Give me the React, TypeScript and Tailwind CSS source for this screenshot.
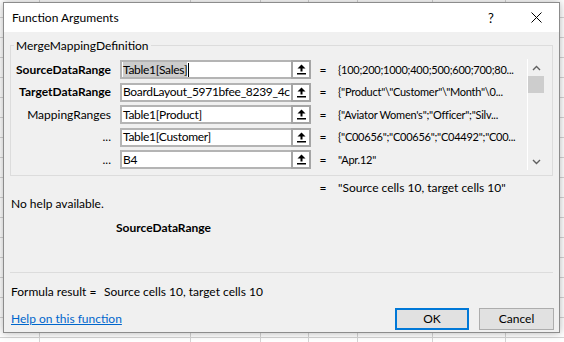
const rows = [
  {
    label: "SourceDataRange",
    bold: true,
    input: "Table1[Sales]",
    value: "{100;200;1000;400;500;600;700;80...",
    selected: true,
  },
  {
    label: "TargetDataRange",
    bold: true,
    input: "BoardLayout_5971bfee_8239_4c",
    value: '{"Product"\\"Customer"\\"Month"\\0...',
    selected: false,
  },
  {
    label: "MappingRanges",
    bold: false,
    input: "Table1[Product]",
    value: '{"Aviator Women\'s";"Officer";"Silv...',
    selected: false,
  },
  {
    label: "...",
    bold: false,
    input: "Table1[Customer]",
    value: '{"C00656";"C00656";"C04492";"C00...',
    selected: false,
  },
  {
    label: "...",
    bold: false,
    input: "B4",
    value: '"Apr.12"',
    selected: false,
  },
];

const RefArrow = () => (
  <svg width="9" height="11" viewBox="0 0 9 11">
    <path d="M4.5 0.5 L8.5 4.5 H5.5 V7.5 H3.5 V4.5 H0.5 Z" fill="#000" />
    <rect x="0" y="9" width="9" height="1.5" fill="#000" />
  </svg>
);

const Chevron = ({ up }: { up: boolean }) => (
  <svg width="9" height="6" viewBox="0 0 9 6">
    <path
      d={up ? "M1 5 L4.5 1.5 L8 5" : "M1 1 L4.5 4.5 L8 1"}
      fill="none"
      stroke="#606060"
      strokeWidth="1.4"
    />
  </svg>
);

const ArgRow = ({
  label,
  bold,
  input,
  value,
  selected,
}: (typeof rows)[number]) => (
  <div className="flex h-[19px] items-center">
    <div
      className={`w-[100px] shrink-0 text-right ${bold ? "font-bold" : ""}`}
    >
      {label}
    </div>
    <div className="ml-[9px] flex h-[19px] w-[171px] shrink-0 items-center overflow-hidden border-2 border-r-0 border-[#b4b4b4] bg-white pl-[1px] tracking-[-0.3px] whitespace-nowrap">
      {selected ? (
        <>
          <span className="bg-[#cccccc]">{input}</span>
          <span className="ml-[1px] h-[14px] w-px bg-black" />
        </>
      ) : (
        <span>{input}</span>
      )}
    </div>
    <div className="flex h-[19px] w-[20px] shrink-0 items-center justify-center border-2 border-[#a5a5a5] bg-white">
      <RefArrow />
    </div>
    <div className="w-[24px] shrink-0 text-center">=</div>
    <div className="ml-[3px] text-[11px] tracking-[-0.25px] whitespace-nowrap">
      {value}
    </div>
  </div>
);

export default function App() {
  return (
    <div className="relative h-[342px] w-[564px] overflow-hidden bg-white font-['Lato',sans-serif] text-[12px] leading-[16px] text-black">
      {/* spreadsheet grid behind the dialog */}
      <div className="absolute inset-0">
        <div className="absolute top-0 bottom-0 left-[39px] w-px bg-[#d4d4d4]" />
        <div className="absolute top-0 bottom-0 left-[190px] w-px bg-[#d4d4d4]" />
        <div className="absolute top-0 bottom-0 left-[260px] w-px bg-[#d4d4d4]" />
        <div className="absolute top-0 bottom-0 left-[308px] w-px bg-[#d4d4d4]" />
        <div className="absolute top-0 bottom-0 left-[357px] w-px bg-[#d4d4d4]" />
        <div className="absolute top-0 bottom-0 left-[432px] w-px bg-[#d4d4d4]" />
        <div className="absolute top-0 bottom-0 left-[505px] w-px bg-[#d4d4d4]" />
        <div className="absolute left-0 right-0 top-[337px] h-px bg-[#d4d4d4]" />
        <div className="absolute left-0 right-0 top-[317px] h-px bg-[#d4d4d4]" />
        <div className="absolute left-0 right-0 top-[297px] h-px bg-[#d4d4d4]" />
        <div className="absolute left-0 right-0 top-[277px] h-px bg-[#d4d4d4]" />
        <div className="absolute left-0 right-0 top-[257px] h-px bg-[#d4d4d4]" />
        <div className="absolute left-0 right-0 top-[237px] h-px bg-[#d4d4d4]" />
        <div className="absolute left-0 right-0 top-[217px] h-px bg-[#d4d4d4]" />
        <div className="absolute left-0 right-0 top-[197px] h-px bg-[#d4d4d4]" />
        <div className="absolute left-0 right-0 top-[177px] h-px bg-[#d4d4d4]" />
        <div className="absolute left-0 right-0 top-[157px] h-px bg-[#d4d4d4]" />
        <div className="absolute left-0 right-0 top-[137px] h-px bg-[#d4d4d4]" />
        <div className="absolute left-0 right-0 top-[117px] h-px bg-[#d4d4d4]" />
        <div className="absolute left-0 right-0 top-[97px] h-px bg-[#d4d4d4]" />
        <div className="absolute left-0 right-0 top-[77px] h-px bg-[#d4d4d4]" />
        <div className="absolute left-0 right-0 top-[57px] h-px bg-[#d4d4d4]" />
        <div className="absolute left-0 right-0 top-[37px] h-px bg-[#d4d4d4]" />
        <div className="absolute left-0 right-0 top-[17px] h-px bg-[#d4d4d4]" />
      </div>

      {/* dialog */}
      <div className="relative mt-[2px] ml-[3px] flex h-[331px] w-[557px] flex-col overflow-hidden border border-[#8c8c8c] bg-[#f0f0f0] shadow-[0_0_8px_rgba(0,0,0,0.3)]">
        <div className="flex h-[29px] shrink-0 items-center bg-white">
          <div className="pl-[8px]">Function Arguments</div>
          <div className="ml-auto flex h-full w-[46px] items-center justify-center text-[13px]">
            ?
          </div>
          <div className="flex h-full w-[45px] items-center justify-center">
            <svg width="11" height="11" viewBox="0 0 11 11">
              <path d="M0.5 0.5 L10.5 10.5 M10.5 0.5 L0.5 10.5" stroke="#000" strokeWidth="1" />
            </svg>
          </div>
        </div>

        <div className="flex flex-col pt-[13px]">
          {/* group box */}
          <div className="relative ml-[6px] flex h-[131px] w-[543px] border border-[#dcdcdc]">
            <div className="absolute -top-[8px] left-[3px] bg-[#f0f0f0] px-[2px]">
              MergeMappingDefinition
            </div>
            <div className="flex w-[516px] flex-col gap-[3.5px] pt-[14px]">
              {rows.map((r, i) => (
                <ArgRow key={i} {...r} />
              ))}
            </div>
            <div className="mt-[13px] flex h-[111px] w-[17px] flex-col border-l border-white">
              <div className="flex h-[17px] items-center justify-center">
                <Chevron up />
              </div>
              <div className="h-[17px] bg-[#cdcdcd]" />
              <div className="flex-1" />
              <div className="flex h-[17px] items-center justify-center">
                <Chevron up={false} />
              </div>
            </div>
          </div>

          {/* same columns as the argument rows */}
          <div className="mt-[4px] ml-[7px] flex">
            <div className="w-[300px] shrink-0" />
            <div className="w-[24px] shrink-0 text-center">=</div>
            <div className="ml-[3px] whitespace-nowrap">
              "Source cells 10, target cells 10"
            </div>
          </div>
          <div className="ml-[7px]">No help available.</div>
          <div className="mt-[8px] ml-[112px] font-bold">SourceDataRange</div>

          <div className="mt-[36px] ml-[6px] h-px w-[543px] bg-[#dcdcdc]" />

          <div className="mt-[11px] ml-[7px] flex">
            <div className="w-[93px]">Formula result =</div>
            <div>Source cells 10, target cells 10</div>
          </div>

          <div className="mt-[8px] flex h-[22px] items-center">
            <a className="ml-[7px] text-[#0066cc] underline" href="#">
              Help on this function
            </a>
            <button className="ml-auto h-[22px] w-[74px] border-2 border-[#0078d7] bg-[#e1e1e1]">
              OK
            </button>
            <button className="mr-[5px] ml-[10px] h-[22px] w-[75px] border border-[#adadad] bg-[#e1e1e1]">
              Cancel
            </button>
          </div>
        </div>
      </div>
    </div>
  );
}
